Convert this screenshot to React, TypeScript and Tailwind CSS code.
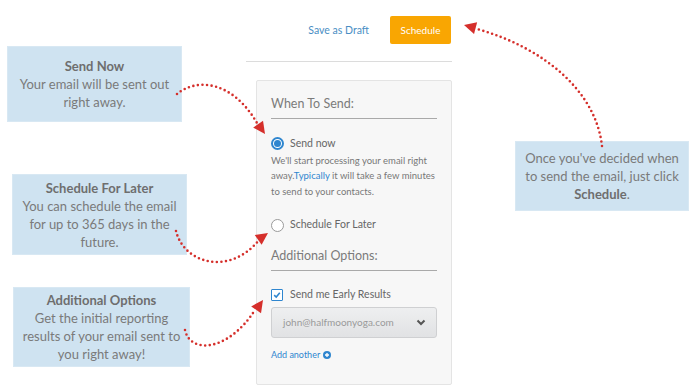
import React from "react";

const RED = "#d52f2b";

function head(x: number, y: number, deg: number) {
  // triangle pointing in direction deg, tip at (x, y)
  const a = (deg * Math.PI) / 180;
  const L = 12;
  const W = 6;
  const bx = x - L * Math.cos(a);
  const by = y - L * Math.sin(a);
  const px = -Math.sin(a) * W;
  const py = Math.cos(a) * W;
  return `${x},${y} ${bx + px},${by + py} ${bx - px},${by - py}`;
}

const arrows = [
  { d: "M177 94 C 196 78, 232 80, 257 123", tip: [265, 134, 55] },
  { d: "M176 231 C 184 264, 230 276, 259 240", tip: [268, 233, -35] },
  { d: "M185 330 C 190 354, 228 352, 255 310", tip: [263, 300, -55] },
  { d: "M602 146 C 596 92, 545 48, 477 29", tip: [464, 25, 195] },
];

function Callout({ title, children, className }: { title?: string; children: React.ReactNode; className: string }) {
  return (
    <div
      className={`bg-[#cfe3f1] border border-[#d8e8f3] text-center text-[13px] leading-[18px] text-[#7a7a7a] flex flex-col justify-center ${className}`}
    >
      {title && <div className="font-bold text-[#6e6e6e]">{title}</div>}
      {children}
    </div>
  );
}

function Radio({ checked }: { checked?: boolean }) {
  return checked ? (
    <span className="w-[13px] h-[13px] rounded-full border-2 border-[#2f86cf] bg-white flex items-center justify-center">
      <span className="w-[7px] h-[7px] rounded-full bg-[#2f86cf]" />
    </span>
  ) : (
    <span className="w-[13px] h-[13px] rounded-full border-[1.5px] border-[#9a9a9a] bg-white" />
  );
}

export default function App() {
  return (
    <div className="relative w-[700px] h-[391px] bg-white overflow-hidden flex" style={{ fontFamily: "Lato, 'Open Sans', sans-serif" }}>
      {/* left notes */}
      <div className="w-[246px] flex flex-col">
        <Callout title="Send Now" className="ml-[7px] mt-[46px] w-[175px] h-[76px]">
          <div>Your email will be sent out</div>
          <div>right away.</div>
        </Callout>
        <Callout title="Schedule For Later" className="ml-[12px] mt-[52px] w-[175px] h-[81px]">
          <div>You can schedule the email</div>
          <div>for up to 365 days in the</div>
          <div>future.</div>
        </Callout>
        <Callout title="Additional Options" className="ml-[13px] mt-[32px] w-[177px] h-[80px]">
          <div>Get the initial reporting</div>
          <div>results of your email sent to</div>
          <div>you right away!</div>
        </Callout>
      </div>

      {/* form */}
      <div className="w-[206px] flex flex-col">
        <div className="h-[62px] flex items-start justify-end pt-[16px] border-b border-[#dcdcdc]">
          <span className="text-[10.5px] text-[#4a8ec4] mt-[7px] mr-[21px]">Save as Draft</span>
          <button className="w-[61px] h-[28px] rounded-[2px] bg-[#f9a602] text-white text-[10px] mr-[1px]">Schedule</button>
        </div>
        <div className="ml-[10px] mt-[18px] h-[305px] bg-[#f7f7f7] border border-[#e4e4e4] rounded-[2px] pl-[14px] pr-[14px] pt-[14px]">
          <div className="text-[12.5px] text-[#7b7b7b] leading-[18px] pb-[5px] border-b border-[#a9a9a9]">When To Send:</div>
          <div className="flex items-center gap-[6px] mt-[17px]">
            <Radio checked />
            <span className="text-[10.5px] text-[#666]">Send now</span>
          </div>
          <p className="text-[9.5px] leading-[15.5px] text-[#777] mt-[1px]">
            We'll start processing your email right away.<span className="text-[#2f86cf]">Typically</span> it will take a few minutes to send to your contacts.
          </p>
          <div className="flex items-center gap-[6px] mt-[18px]">
            <Radio />
            <span className="text-[10.5px] text-[#666]">Schedule For Later</span>
          </div>
          <div className="text-[12.5px] text-[#7b7b7b] leading-[18px] pb-[5px] border-b border-[#a9a9a9] mt-[14px]">Additional Options:</div>
          <div className="flex items-center gap-[7px] mt-[16px]">
            <span className="w-[12px] h-[12px] border-[1.5px] border-[#2f86cf] bg-white rounded-[1px] flex items-center justify-center">
              <svg width="8" height="8" viewBox="0 0 8 8">
                <path d="M1.2 4.2 L3.2 6 L6.8 1.8" fill="none" stroke="#2f86cf" strokeWidth="1.6" />
              </svg>
            </span>
            <span className="text-[10.5px] text-[#666]">Send me Early Results</span>
          </div>
          <div className="mt-[4px] h-[31px] rounded-[3px] border border-[#cfd0d2] bg-gradient-to-b from-[#eeeff0] to-[#e1e2e4] flex items-center justify-between pl-[11px] pr-[10px]">
            <span className="text-[10px] text-[#9a9a9a]">john@halfmoonyoga.com</span>
            <svg width="10" height="7" viewBox="0 0 10 7">
              <path d="M1.5 1.5 L5 5 L8.5 1.5" fill="none" stroke="#555" strokeWidth="2" />
            </svg>
          </div>
          <div className="flex items-center gap-[3px] mt-[10px] text-[9px] text-[#2f86cf]">
            <span>Add another</span>
            <svg width="8" height="8" viewBox="0 0 8 8">
              <circle cx="4" cy="4" r="4" fill="#2f86cf" />
              <path d="M4 2 V6 M2 4 H6" stroke="#fff" strokeWidth="1.3" />
            </svg>
          </div>
        </div>
      </div>

      {/* right note */}
      <div className="flex-1">
        <Callout className="ml-[63px] mt-[141px] w-[174px] h-[70px]">
          <div>Once you've decided when</div>
          <div>to send the email, just click</div>
          <div>
            <span className="font-bold text-[#6e6e6e]">Schedule</span>.
          </div>
        </Callout>
      </div>

      {/* arrows over content */}
      <svg className="absolute inset-0 pointer-events-none" width="700" height="391">
        {arrows.map((a, i) => (
          <g key={i}>
            <path d={a.d} fill="none" stroke={RED} strokeWidth="2.6" strokeLinecap="round" strokeDasharray="0 4.6" />
            <polygon points={head(a.tip[0], a.tip[1], a.tip[2])} fill={RED} />
          </g>
        ))}
      </svg>
    </div>
  );
}
